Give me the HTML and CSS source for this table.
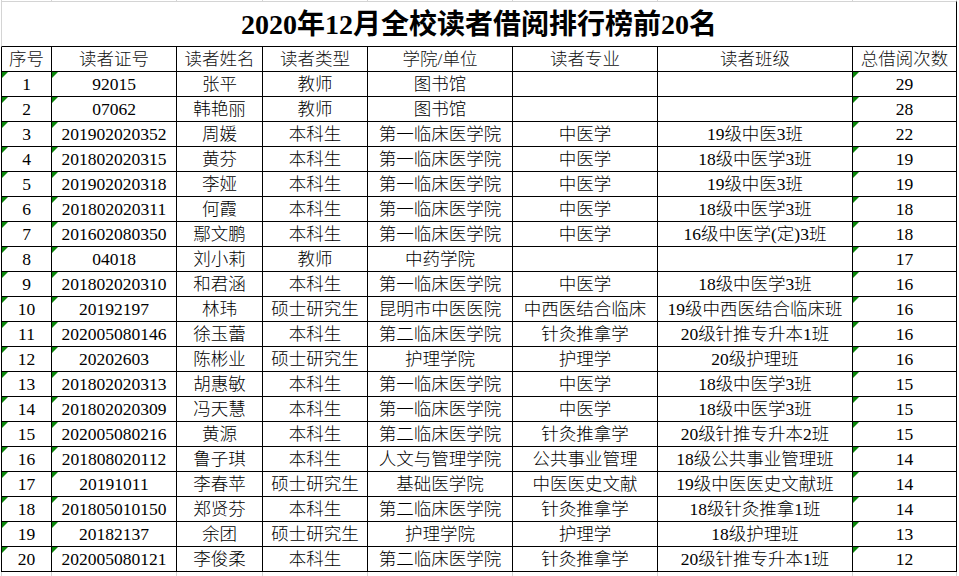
FILE: index.html
```html
<!DOCTYPE html>
<html lang="zh-CN">
<head>
<meta charset="utf-8">
<title>2020年12月全校读者借阅排行榜前20名</title>
<link rel="stylesheet" href="styles.css">
</head>
<body>
<div class="sheet">
  <div class="g l"></div><div class="g"></div><div class="g"></div><div class="g"></div><div class="g"></div><div class="g"></div><div class="g"></div><div class="g"></div>

  <div class="title">2020年12月全校读者借阅排行榜前20名</div>

  <div class="c h l">序号</div><div class="c h">读者证号</div><div class="c h">读者姓名</div><div class="c h">读者类型</div><div class="c h">学院/单位</div><div class="c h">读者专业</div><div class="c h">读者班级</div><div class="c h">总借阅次数</div>

  <div class="c l m">1</div><div class="c m">92015</div><div class="c">张平</div><div class="c">教师</div><div class="c">图书馆</div><div class="c"></div><div class="c"></div><div class="c m">29</div>
  <div class="c l m">2</div><div class="c m">07062</div><div class="c">韩艳丽</div><div class="c">教师</div><div class="c">图书馆</div><div class="c"></div><div class="c"></div><div class="c m">28</div>
  <div class="c l m">3</div><div class="c m">201902020352</div><div class="c">周媛</div><div class="c">本科生</div><div class="c">第一临床医学院</div><div class="c">中医学</div><div class="c">19级中医3班</div><div class="c m">22</div>
  <div class="c l m">4</div><div class="c m">201802020315</div><div class="c">黄芬</div><div class="c">本科生</div><div class="c">第一临床医学院</div><div class="c">中医学</div><div class="c">18级中医学3班</div><div class="c m">19</div>
  <div class="c l m">5</div><div class="c m">201902020318</div><div class="c">李娅</div><div class="c">本科生</div><div class="c">第一临床医学院</div><div class="c">中医学</div><div class="c">19级中医3班</div><div class="c m">19</div>
  <div class="c l m">6</div><div class="c m">201802020311</div><div class="c">何霞</div><div class="c">本科生</div><div class="c">第一临床医学院</div><div class="c">中医学</div><div class="c">18级中医学3班</div><div class="c m">18</div>
  <div class="c l m">7</div><div class="c m">201602080350</div><div class="c">鄢文鹏</div><div class="c">本科生</div><div class="c">第一临床医学院</div><div class="c">中医学</div><div class="c">16级中医学(定)3班</div><div class="c m">18</div>
  <div class="c l m">8</div><div class="c m">04018</div><div class="c">刘小莉</div><div class="c">教师</div><div class="c">中药学院</div><div class="c"></div><div class="c"></div><div class="c m">17</div>
  <div class="c l m">9</div><div class="c m">201802020310</div><div class="c">和君涵</div><div class="c">本科生</div><div class="c">第一临床医学院</div><div class="c">中医学</div><div class="c">18级中医学3班</div><div class="c m">16</div>
  <div class="c l m">10</div><div class="c m">20192197</div><div class="c">林玮</div><div class="c">硕士研究生</div><div class="c">昆明市中医医院</div><div class="c">中西医结合临床</div><div class="c">19级中西医结合临床班</div><div class="c m">16</div>
  <div class="c l m">11</div><div class="c m">202005080146</div><div class="c">徐玉蕾</div><div class="c">本科生</div><div class="c">第二临床医学院</div><div class="c">针灸推拿学</div><div class="c">20级针推专升本1班</div><div class="c m">16</div>
  <div class="c l m">12</div><div class="c m">20202603</div><div class="c">陈彬业</div><div class="c">硕士研究生</div><div class="c">护理学院</div><div class="c">护理学</div><div class="c">20级护理班</div><div class="c m">16</div>
  <div class="c l m">13</div><div class="c m">201802020313</div><div class="c">胡惠敏</div><div class="c">本科生</div><div class="c">第一临床医学院</div><div class="c">中医学</div><div class="c">18级中医学3班</div><div class="c m">15</div>
  <div class="c l m">14</div><div class="c m">201802020309</div><div class="c">冯天慧</div><div class="c">本科生</div><div class="c">第一临床医学院</div><div class="c">中医学</div><div class="c">18级中医学3班</div><div class="c m">15</div>
  <div class="c l m">15</div><div class="c m">202005080216</div><div class="c">黄源</div><div class="c">本科生</div><div class="c">第二临床医学院</div><div class="c">针灸推拿学</div><div class="c">20级针推专升本2班</div><div class="c m">15</div>
  <div class="c l m">16</div><div class="c m">201808020112</div><div class="c">鲁子琪</div><div class="c">本科生</div><div class="c">人文与管理学院</div><div class="c">公共事业管理</div><div class="c">18级公共事业管理班</div><div class="c m">14</div>
  <div class="c l m">17</div><div class="c m">20191011</div><div class="c">李春苹</div><div class="c">硕士研究生</div><div class="c">基础医学院</div><div class="c">中医医史文献</div><div class="c">19级中医医史文献班</div><div class="c m">14</div>
  <div class="c l m">18</div><div class="c m">201805010150</div><div class="c">郑贤芬</div><div class="c">本科生</div><div class="c">第二临床医学院</div><div class="c">针灸推拿学</div><div class="c">18级针灸推拿1班</div><div class="c m">14</div>
  <div class="c l m">19</div><div class="c m">20182137</div><div class="c">余团</div><div class="c">硕士研究生</div><div class="c">护理学院</div><div class="c">护理学</div><div class="c">18级护理班</div><div class="c m">13</div>
  <div class="c l m">20</div><div class="c m">202005080121</div><div class="c">李俊柔</div><div class="c">本科生</div><div class="c">第二临床医学院</div><div class="c">针灸推拿学</div><div class="c">20级针推专升本1班</div><div class="c m">12</div>

  <div class="g b l"></div><div class="g b"></div><div class="g b"></div><div class="g b"></div><div class="g b"></div><div class="g b"></div><div class="g b"></div><div class="g b"></div>
</div>
</body>
</html>
```
FILE: styles.css
```css
html, body {
  margin: 0;
  padding: 0;
  background: #ffffff;
}
body {
  font-family: "Liberation Serif", "Noto Sans CJK SC", serif;
  color: #000;
  overflow: hidden;
}
.sheet {
  display: grid;
  grid-template-columns: 51px 125px 86px 105px 145px 145px 195px 104px;
  grid-template-rows: 1px 46px repeat(21, 25px) 5px;
  margin-left: 1px;
}
.g {
  box-sizing: border-box;
  border-right: 1px solid #d4d4d4;
}
.g.l {
  border-left: 1px solid #d4d4d4;
}
.title {
  grid-column: 1 / -1;
  box-sizing: border-box;
  border-top: 1px solid #d4d4d4;
  border-left: 1px solid #d4d4d4;
  border-right: 1px solid #000;
  border-bottom: 1px solid #000;
  display: flex;
  align-items: center;
  justify-content: center;
  font-size: 28px;
  font-weight: bold;
  line-height: 1;
  padding-top: 1px;
}
.c {
  position: relative;
  box-sizing: border-box;
  border-right: 1px solid #000;
  border-bottom: 1px solid #000;
  display: flex;
  align-items: center;
  justify-content: center;
  font-size: 17.5px;
  font-weight: 300;
  line-height: 1;
  white-space: nowrap;
  padding-top: 2px;
  color: #000;
}
.c.l {
  border-left: 1px solid #000;
}
.c.h {
  color: #111;
}
.c.m::before {
  content: "";
  position: absolute;
  top: 0;
  left: 0;
  width: 0;
  height: 0;
  border-top: 6px solid #0a870a;
  border-right: 6px solid transparent;
}
```
